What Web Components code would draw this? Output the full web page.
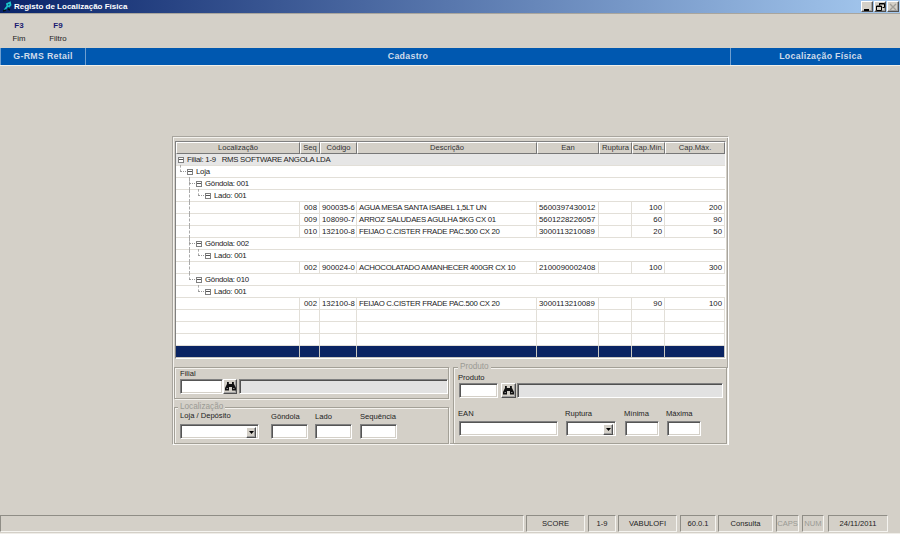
<!DOCTYPE html>
<html lang="pt"><head><meta charset="utf-8"><title>Registo de Localização Física</title>
<style>
html,body{margin:0;height:100%;background:#d4d0c8}
body{width:900px;height:534px;overflow:hidden;font:7.8px "Liberation Sans",Arial,sans-serif;color:#222;display:flex;flex-direction:column}
</style></head><body>
<app-titlebar>Registo de Localização Física</app-titlebar>
<app-toolbar><tool-btn key="F3">Fim</tool-btn><tool-btn key="F9">Filtro</tool-btn></app-toolbar>
<app-band></app-band>
<app-main><data-grid></data-grid></app-main>
<app-status></app-status>
<script>
const def=(n,html,fn)=>customElements.define(n,class extends HTMLElement{constructor(){super();this.attachShadow({mode:'open'}).innerHTML=html;}connectedCallback(){fn&&fn.call(this,this.shadowRoot)}});
const sunk='border:1px solid;border-color:#808080 #fff #fff #808080;box-shadow:inset 1px 1px 0 #555,inset -1px -1px 0 #d4d0c8;box-sizing:border-box;';
const raised='box-sizing:border-box;background:#d4d0c8;border:1px solid;border-color:#fff #505050 #505050 #fff;box-shadow:inset -1px -1px 0 #a0a0a0;';

def('app-titlebar',`<style>:host{display:flex;align-items:center;height:13px;padding-right:1px;margin-bottom:1px;background:linear-gradient(90deg,#0a246a,#a6caf0);color:#fff;font:bold 8px "Liberation Sans",sans-serif;flex:none;box-shadow:0 1px 0 #a8a59e}
svg.i{margin:0 2px 0 3px}.t{flex:1}
.b{width:12px;height:11px;${raised}display:flex;align-items:center;justify-content:center}
.b+.b{margin-left:1px}</style>
<svg class="i" width="9" height="11" viewBox="0 0 9 11"><path d="M1.500 9 4.500 5 4 3 7 1.500 7.500 4 5.500 6" fill="none" stroke="#19c4c8" stroke-width="1.800"/><path d="M0 10l3-1M5 8l2 1" stroke="#011" stroke-width="1.400"/></svg>
<span class="t"><slot></slot></span>
<div class="b"><svg width="8" height="8"><path d="M1 7h5" stroke="#000" stroke-width="2"/></svg></div>
<div class="b"><svg width="9" height="8"><path d="M3.500 2.500V.5h5v4h-2M.5 3h5v4.500h-5z" fill="none" stroke="#000"/><path d="M1 3.500h4M3 1h5" stroke="#000"/></svg></div>
<div class="b"><svg width="8" height="8"><path d="M1 1l6 6M7 1 1 7" stroke="#a09e98" stroke-width="1.400"/></svg></div>`);

def('app-toolbar',`<style>:host{display:flex;gap:1px;height:34px;flex:none}</style><slot></slot>`);
def('tool-btn',`<style>:host{display:flex;flex-direction:column;align-items:center;width:38px;padding-top:7px;box-sizing:border-box}
b{color:#1a1a70;font-size:8px;line-height:10px}span{line-height:10px;margin-top:3px;font-size:7.800px;color:#222}</style><b></b><span><slot></slot></span>`,function(s){s.querySelector('b').textContent=this.getAttribute('key')});

def('app-band',`<style>:host{display:grid;grid-template-columns:85px 645px 1fr;height:17px;background:#0058b0;flex:none;box-shadow:0 1px 0 #f1efe9;margin-bottom:1px;color:#cfdbea;font:bold 8.800px/16px "Liberation Sans",sans-serif;letter-spacing:.3px}
div{text-align:center;border-left:1px solid #6f9fd0}div:last-child{padding-left:10px}</style>
<div>G-RMS Retail</div><div>Cadastro</div><div>Localização Física</div>`);

def('app-main',`<style>:host{display:block;flex:1;padding-top:70px;padding-left:172px}
.p{width:557px;height:309px;box-sizing:border-box;border:1px solid;border-color:#a8a59e #fff #fff #a8a59e;box-shadow:inset 1px 1px 0 #f4f2ee,inset -1px -1px 0 #a8a59e;padding:4px 0 0 2px}
.low{display:grid;grid-template-columns:275px 274px;gap:4px;margin:8px 0 0 -1px}
.l{display:flex;flex-direction:column;gap:8px}</style>
<div class="p"><slot></slot>
<div class="low"><div class="l"><filial-box></filial-box><local-box></local-box></div><produto-box></produto-box></div></div>`);

const rows=[
 {lv:0,t:'Filial: 1-9   RMS SOFTWARE ANGOLA LDA',g:1},
 {lv:1,t:'Loja'},
 {lv:2,t:'Gôndola: 001',v:1},
 {lv:3,t:'Lado: 001',v:1},
 {d:['008','900035-6','AGUA MESA SANTA ISABEL 1,5LT UN','5600397430012','','100','200'],v:1},
 {d:['009','108090-7','ARROZ SALUDAES AGULHA 5KG CX 01','5601228226057','','60','90'],v:1},
 {d:['010','132100-8','FEIJAO C.CISTER FRADE PAC.500 CX 20','3000113210089','','20','50'],v:1},
 {lv:2,t:'Gôndola: 002',v:1},
 {lv:3,t:'Lado: 001',v:1},
 {d:['002','900024-0','ACHOCOLATADO AMANHECER 400GR CX 10','2100090002408','','100','300'],v:1},
 {lv:2,t:'Gôndola: 010'},
 {lv:3,t:'Lado: 001'},
 {d:['002','132100-8','FEIJAO C.CISTER FRADE PAC.500 CX 20','3000113210089','','90','100']},
 {e:1},{e:1},{e:1},{sel:1}
];
def('data-grid',`<style>:host{display:block;width:551px;height:218px;${sunk}background:#d4d0c8}
.g{display:grid;grid-template-columns:124px 20px 37px 180px 62px 33px 33px 60px;grid-auto-rows:12px;grid-template-rows:12px;width:549px;background:#fff}
.h{${raised}box-shadow:none;border-color:#fff #777 #777 #fff;text-align:center;line-height:10px;font-size:7.600px;color:#333;white-space:nowrap;overflow:hidden}
.c{box-sizing:border-box;border-right:1px solid #e2dfd8;border-bottom:1px solid #e2dfd8;line-height:11px;white-space:nowrap;padding:0 2px;color:#222;font-size:7.800px}
.r{text-align:right}
.ds{letter-spacing:-.3px}
.span{grid-column:1/-1;border-right:0;padding:0;position:relative;white-space:pre;display:flex;align-items:center;letter-spacing:-.25px}
.gray{background:#e6e6e6}.sel{background:#0a2463;border-color:#c8c6c0}
.box{flex:none;width:6px;height:6px;box-sizing:border-box;border:1px solid #808080;background:linear-gradient(#555,#555) center/4px 1px no-repeat #fff;margin-right:3px}
.tree{padding:0;position:relative}
.gd{position:absolute;top:0;bottom:-1px;width:0;border-left:1px dashed #aaa;left:13px}
.el{position:absolute;height:0;border-top:1px dotted #999;top:5px;width:6px}
.gdh{position:absolute;top:-1px;height:7px;width:0;border-left:1px dashed #aaa}
</style><div class="g"></div>`,function(s){
 let h='';
 ['Localização','Seq','Código','Descrição','Ean','Ruptura','Cap.Mín.','Cap.Máx.'].forEach(x=>h+=`<div class="h">${x}</div>`);
 const lx=[2,11,20,29];
 rows.forEach(r=>{
  const vg=r.v?'<i class="gd"></i>':'';
  if(r.lv!==undefined){
   const pad=lx[r.lv];let extra=vg;
   if(r.lv>0)extra+=`<i class="gdh" style="left:${pad-7}px"></i><i class="el" style="left:${pad-7}px"></i>`;
   h+=`<div class="c span ${r.g?'gray':''}" style="padding-left:${pad}px">${extra}<i class="box"></i>${r.t}</div>`;
  }else if(r.d){
   h+=`<div class="c tree">${vg}</div>`;
   r.d.forEach((v,i)=>h+=`<div class="c ${i==0||i>=5?'r':''} ${i==2?'ds':''}">${v}</div>`);
  }else for(let i=0;i<8;i++)h+=`<div class="c ${r.sel?'sel':''}"></div>`;
 });
 s.querySelector('.g').innerHTML=h;
});

const fieldCss=`.f{display:flex;flex-direction:column;justify-content:flex-end}
label{display:block;line-height:9px;margin-bottom:3px;color:#222;white-space:nowrap;font-size:7.600px}
.in{display:block;height:15px;background:#fff;${sunk}}
.ro{height:15px;background:#e2e2e2;${sunk}box-shadow:inset 1px 1px 0 #505050}
.btn{width:14px;height:15px;${raised}display:flex;align-items:center;justify-content:center;flex:none}
.sel{display:flex;justify-content:flex-end;padding:2px;height:15px;background:#fff;${sunk}}
.sel i{display:flex;width:10px;height:11px;${raised}align-items:center;justify-content:center}
.row{display:flex;align-items:flex-end}
.leg{position:absolute;left:3px;top:-6px;background:#d4d0c8;padding:0 2px;color:#9a9a94;font-size:8.200px;line-height:10px}
:host{position:relative;display:block;box-sizing:border-box;border:1px solid #a3a097;box-shadow:inset 1px 1px 0 #f4f2ee,1px 1px 0 #f4f2ee}`;
const bino=`<svg width="11" height="9" viewBox="0 0 11 9"><path d="M2 0h2v2h3V0h2v2l2 4v2.500H7V5H4v3.500H0V6l2-4z" fill="#111"/><path d="M1.500 6.500h1.500M8 6.500h1.500M3 1h.5M8 1h.5" stroke="#8a8a8a"/></svg>`;
const tri=`<svg width="5" height="3"><path d="M0 0h5L2.500 3z" fill="#000"/></svg>`;
const F=(l,w,sel,lift)=>`<div class="f" style="width:${w}px"><label style="${lift?'margin-bottom:4px':''}">${l}</label>${sel?`<div class="sel"><i>${tri}</i></div>`:`<div class="in"></div>`}</div>`;
const G=w=>`<div style="width:${w}px;flex:none"></div>`;

def('filial-box',`<style>${fieldCss}:host{height:32px;padding:1px 0 0 5px}label{margin-bottom:1px}</style>
<label>Filial</label><div class="row"><div class="in" style="width:43px"></div><div class="btn">${bino}</div><div class="ro" style="width:209px;margin-left:2px"></div></div>`);
def('local-box',`<style>${fieldCss}:host{height:37px;padding:3px 0 0 5px}</style>
<span class="leg">Localização</span>
<div class="row">${F('Loja / Depósito',79,1,1)}${G(12)}${F('Gôndola',37)}${G(7)}${F('Lado',37)}${G(8)}${F('Sequência',37)}</div>`);
def('produto-box',`<style>${fieldCss}:host{height:77px;padding:5px 0 0 5px}label{margin-left:-1px}</style>
<span class="leg" style="left:4px">Produto</span>
<label style="margin-bottom:1px">Produto</label>
<div class="row"><div class="in" style="width:39px"></div><div class="btn" style="margin-left:3px;width:15px">${bino}</div><div class="ro" style="width:206px;margin-left:1px"></div></div>
<div class="row" style="margin-top:11px">${F('EAN',99)}${G(8)}${F('Ruptura',50,1)}${G(9)}${F('Mínima',34)}${G(8)}${F('Máxima',34)}</div>`);

def('app-status',`<style>:host{display:flex;height:19px;padding-bottom:1px;border-bottom:1px solid #efede8;flex:none;gap:2px;box-sizing:border-box}
div{box-sizing:border-box;border:1px solid;border-color:#8f8d86 #f5f4f0 #f5f4f0 #8f8d86;text-align:center;line-height:15px;color:#222;font-size:7.600px;white-space:nowrap}
.o{color:#9a9a94}</style>
<div style="width:524px"></div><div style="width:59px">SCORE</div><div style="width:28px;margin-left:1px">1-9</div><div style="width:59px">VABULOFI</div><div style="width:36px;margin-left:1px">60.0.1</div><div style="width:55px">Consulta</div><div class="o" style="width:23px;margin-left:1px">CAPS</div><div class="o" style="width:22px;margin-left:1px">NUM</div><div style="width:60px;margin-left:2px">24/11/2011</div>`);
</script>
</body></html>
